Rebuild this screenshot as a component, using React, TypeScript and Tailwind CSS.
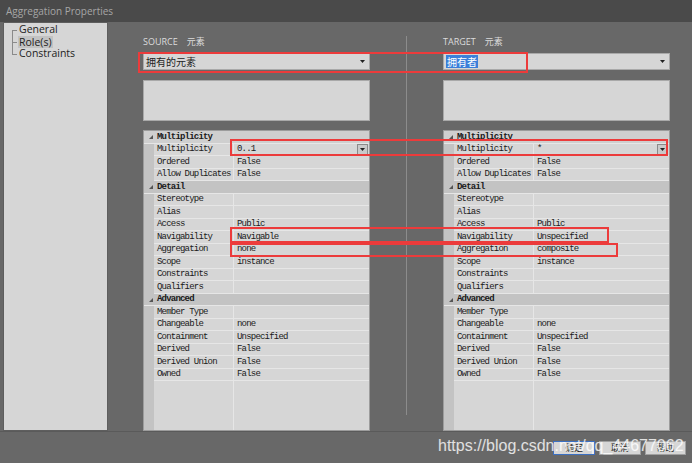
import React from "react";

type Row = { name: string; value?: string; header?: boolean; combo?: boolean; light?: boolean };

const sourceRows: Row[] = [
  { name: "Multiplicity", header: true, light: true },
  { name: "Multiplicity", value: "0..1", combo: true },
  { name: "Ordered", value: "False" },
  { name: "Allow Duplicates", value: "False" },
  { name: "Detail", header: true },
  { name: "Stereotype" },
  { name: "Alias" },
  { name: "Access", value: "Public" },
  { name: "Navigability", value: "Navigable" },
  { name: "Aggregation", value: "none" },
  { name: "Scope", value: "instance" },
  { name: "Constraints" },
  { name: "Qualifiers" },
  { name: "Advanced", header: true },
  { name: "Member Type" },
  { name: "Changeable", value: "none" },
  { name: "Containment", value: "Unspecified" },
  { name: "Derived", value: "False" },
  { name: "Derived Union", value: "False" },
  { name: "Owned", value: "False" },
];

const targetRows: Row[] = sourceRows.map((r) => {
  if (r.combo) return { ...r, value: "*" };
  if (r.name === "Navigability") return { ...r, value: "Unspecified" };
  if (r.name === "Aggregation") return { ...r, value: "composite" };
  return r;
});

const Arrow = () => (
  <svg width="5" height="3" viewBox="0 0 5 3">
    <path d="M0 0h5L2.5 3z" fill="#222" />
  </svg>
);

const Grid = ({ rows }: { rows: Row[] }) => (
  <div className="flex flex-1 flex-col border border-[#9c9c9c] bg-[#d6d6d6] font-['Liberation_Mono',monospace] text-[9px] tracking-[-0.8px] text-[#1a1a1a]">
    {rows.map((r, i) =>
      r.header ? (
        <div
          key={i}
          className={`flex h-[12.5px] items-center border-b border-[#e6e6e6] pt-[1px] ${r.light ? "bg-[#cfcfcf]" : "bg-[#c3c3c3]"}`}
        >
          <span className="flex w-[13px] justify-center">
            <svg width="4" height="4" viewBox="0 0 4 4">
              <path d="M4 0v4H0z" fill="#555" />
            </svg>
          </span>
          <span className="font-bold">{r.name}</span>
        </div>
      ) : (
        <div key={i} className="flex h-[12.5px]">
          <div className="w-[10px] bg-[#c3c3c3]" />
          <div className="flex w-[80px] items-center border-b border-r border-[#e6e6e6] pl-[3px] pt-[1px]">
            {r.name}
          </div>
          <div className="flex flex-1 items-center justify-between border-b border-[#e6e6e6] pl-[3px]">
            <span className="pt-[1px]">{r.value}</span>
            {r.combo && (
              <span className="mr-[1px] flex h-[11px] w-[11px] items-center justify-center border border-[#8a8a8a] bg-[#c9c9c9]">
                <Arrow />
              </span>
            )}
          </div>
        </div>
      )
    )}
    <div className="flex flex-1">
      <div className="w-[10px] bg-[#c3c3c3]" />
      <div className="w-[80px] border-r border-[#e6e6e6]" />
    </div>
  </div>
);

const Side = ({
  label,
  value,
  selected,
  rows,
}: {
  label: string;
  value: string;
  selected?: boolean;
  rows: Row[];
}) => (
  <div className="flex w-[227px] flex-col pt-[14px]">
    <div className="flex h-[12px] items-center gap-[9px] font-['Open_Sans','Noto_Sans_CJK_SC',sans-serif] text-[9px] text-[#dcdcdc]">
      <span>{label}</span>
      <span>元素</span>
    </div>
    <div className="mt-[5px] flex h-[17px] items-center justify-between border border-[#a9a9a9] bg-[#d6d6d6] pl-[2px] pr-[4px] font-['Noto_Sans_CJK_SC',sans-serif] text-[10px] text-[#222]">
      <span className={selected ? "bg-[#3b7fd9] px-[1px] leading-[13px] text-white" : ""}>{value}</span>
      <Arrow />
    </div>
    <div className="mt-[10px] h-[41px] border border-[#a9a9a9] bg-[#d6d6d6]" />
    <div className="mt-[9px] flex flex-1 flex-col">
      <Grid rows={rows} />
    </div>
  </div>
);

const Red = ({ className }: { className: string }) => (
  <div className={`absolute border-2 border-[#ec3b3b] ${className}`} />
);

export default function App() {
  return (
    <div className="relative flex h-[463px] w-[692px] flex-col overflow-hidden bg-[#686868]">
      <div className="flex h-[22px] items-center bg-[#4a4a4a] pl-[6px] font-['Open_Sans',sans-serif] text-[10px] text-[#a6a6a6]">
        Aggregation Properties
      </div>
      <div className="flex h-[409px]">
        <div className="ml-[3px] w-[105px] border border-[#5e5e5e] bg-[#d6d6d6] pt-[1px] font-['Open_Sans',sans-serif] text-[10.5px] text-[#222]">
          <div className="relative ml-[8px] pl-[6px]">
            <div className="absolute left-0 top-[6px] h-[25px] border-l border-[#8a8a8a]" />
            {["General", "Role(s)", "Constraints"].map((t) => (
              <div key={t} className="relative flex h-[12px] items-center">
                <div className="absolute left-[-6px] top-[6px] w-[5px] border-t border-[#8a8a8a]" />
                <span className={t === "Role(s)" ? "bg-[#c2c2c2] px-[1px] leading-[12px]" : "px-[1px]"}>{t}</span>
              </div>
            ))}
          </div>
        </div>
        <div className="ml-[35px] flex">
          <Side label="SOURCE" value="拥有的元素" rows={sourceRows} />
          <div className="mx-[36px] mt-[14px] h-[379px] w-px bg-[#8c8c8c]" />
          <Side label="TARGET" value="拥有者" selected rows={targetRows} />
        </div>
      </div>
      <div className="flex flex-1 items-center justify-end gap-[4px] border-t border-[#5a5a5a] pr-[6px] font-['Noto_Sans_CJK_SC',sans-serif] text-[9px] text-[#222]">
        <div className="flex h-[14px] w-[42px] items-center justify-center border border-[#3a6fc2] bg-[#d6d6d6]">确定</div>
        <div className="flex h-[14px] w-[42px] items-center justify-center border border-[#a0a0a0] bg-[#d6d6d6]">取消</div>
        <div className="flex h-[14px] w-[41px] items-center justify-center border border-[#a0a0a0] bg-[#d6d6d6]">帮助</div>
      </div>

      <Red className="left-[138px] top-[52px] h-[21px] w-[390px]" />
      <Red className="left-[230px] top-[139px] h-[17px] w-[438px]" />
      <Red className="left-[230px] top-[227px] h-[16px] w-[379px]" />
      <Red className="left-[230px] top-[243px] h-[14px] w-[388px]" />

      <div className="absolute left-[438px] top-[436px] font-['Liberation_Sans',sans-serif] text-[16px] leading-[20px] text-white/80">
        https://blog.csdn.net/qq_44677062
      </div>
    </div>
  );
}
